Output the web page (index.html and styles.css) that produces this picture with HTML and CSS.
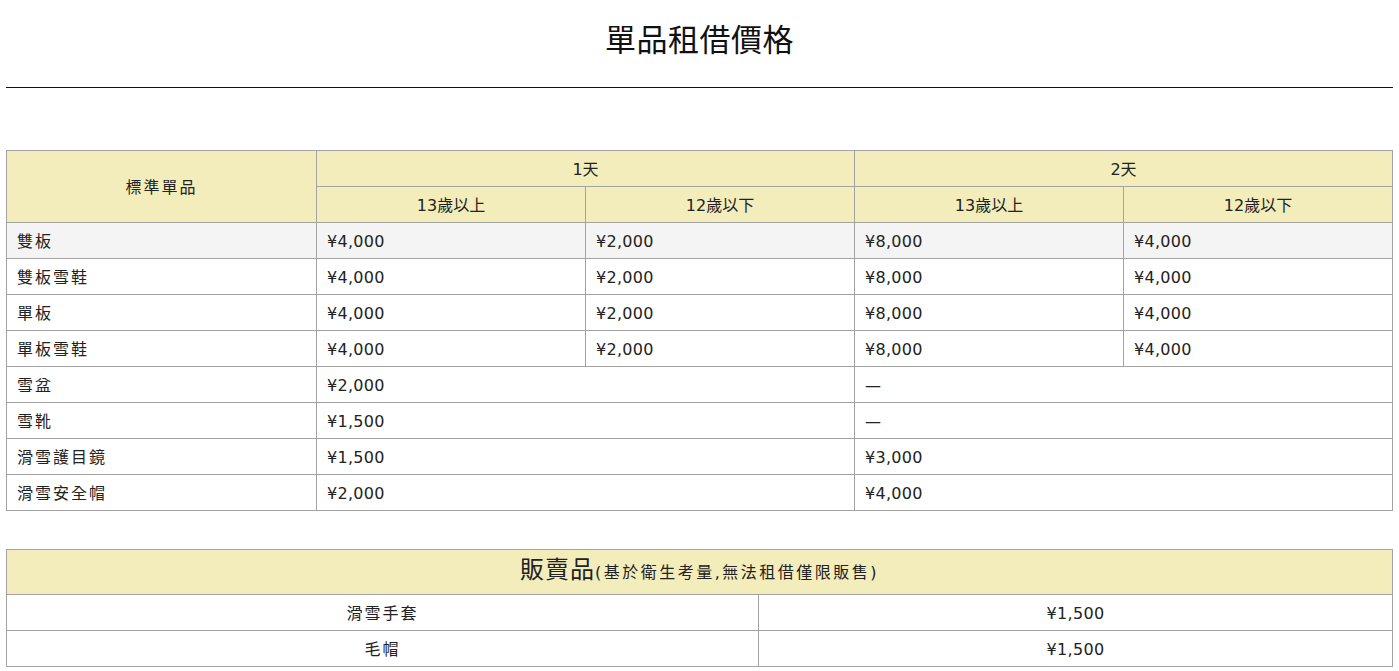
FILE: index.html
```html
<!DOCTYPE html>
<html lang="zh-Hant">
<head>
<meta charset="utf-8">
<title>單品租借價格</title>
<link rel="stylesheet" href="styles.css">
</head>
<body>
<div class="page">
  <h1 class="title">單品租借價格</h1>
  <hr class="rule">
  <table class="price">
    <colgroup>
      <col class="c-name"><col class="c-p"><col class="c-p"><col class="c-p"><col class="c-p">
    </colgroup>
    <thead>
      <tr>
        <th rowspan="2" class="name-head">標準單品</th>
        <th colspan="2">1天</th>
        <th colspan="2">2天</th>
      </tr>
      <tr>
        <th>13歲以上</th>
        <th>12歲以下</th>
        <th>13歲以上</th>
        <th>12歲以下</th>
      </tr>
    </thead>
    <tbody>
      <tr class="hl"><td class="name">雙板</td><td>¥4,000</td><td>¥2,000</td><td>¥8,000</td><td>¥4,000</td></tr>
      <tr><td class="name">雙板雪鞋</td><td>¥4,000</td><td>¥2,000</td><td>¥8,000</td><td>¥4,000</td></tr>
      <tr><td class="name">單板</td><td>¥4,000</td><td>¥2,000</td><td>¥8,000</td><td>¥4,000</td></tr>
      <tr><td class="name">單板雪鞋</td><td>¥4,000</td><td>¥2,000</td><td>¥8,000</td><td>¥4,000</td></tr>
      <tr><td class="name">雪盆</td><td colspan="2">¥2,000</td><td colspan="2">—</td></tr>
      <tr><td class="name">雪靴</td><td colspan="2">¥1,500</td><td colspan="2">—</td></tr>
      <tr><td class="name">滑雪護目鏡</td><td colspan="2">¥1,500</td><td colspan="2">¥3,000</td></tr>
      <tr><td class="name">滑雪安全帽</td><td colspan="2">¥2,000</td><td colspan="2">¥4,000</td></tr>
    </tbody>
  </table>

  <table class="sale">
    <colgroup><col class="c-half1"><col class="c-half2"></colgroup>
    <thead>
      <tr><th colspan="2"><span class="sale-main">販賣品</span><span class="sale-note">(基於衛生考量,無法租借僅限販售)</span></th></tr>
    </thead>
    <tbody>
      <tr><td class="name">滑雪手套</td><td>¥1,500</td></tr>
      <tr><td class="name">毛帽</td><td>¥1,500</td></tr>
    </tbody>
  </table>
</div>
</body>
</html>
```
FILE: styles.css
```css
html, body {
  margin: 0;
  padding: 0;
  background: #fff;
}
body {
  font-family: "DejaVu Sans", "Noto Sans CJK TC", sans-serif;
  color: #222;
}
.page {
  padding: 16px 6px 0 6px;
}
.title {
  margin: 0;
  text-align: center;
  font-family: "Noto Sans CJK TC", sans-serif;
  font-weight: 400;
  font-size: 31px;
  line-height: 44px;
  letter-spacing: 0.5px;
  color: #111;
}
.rule {
  margin: 27px 0 0 0;
  border: 0;
  border-top: 1px solid #111;
  height: 0;
}
table {
  width: 100%;
  border-collapse: collapse;
  table-layout: fixed;
  font-size: 16px;
}
th, td {
  border: 1px solid #a3a3a3;
  line-height: 23px;
  padding: 7px 10px 5px 10px;
  font-weight: 400;
  text-align: left;
}
th {
  background: #f3edbc;
  text-align: center;
}
td {
  letter-spacing: 0.3px;
}
td.name {
  letter-spacing: 2px;
}
.name-head {
  letter-spacing: 2px;
}
.price {
  margin-top: 62px;
}
.c-name { width: 310px; }
.hl td { background: #f4f4f4; }

.sale {
  margin-top: 38px;
}
.c-half1 { width: 752px; }
.sale td { text-align: center; }
.sale th {
  line-height: 32px;
  padding: 7px 10px 5px 10px;
}
.sale-main {
  font-size: 24px;
  line-height: 24px;
  letter-spacing: 1px;
}
.sale-note {
  font-size: 16px;
  line-height: 16px;
  letter-spacing: 2.5px;
}
```
